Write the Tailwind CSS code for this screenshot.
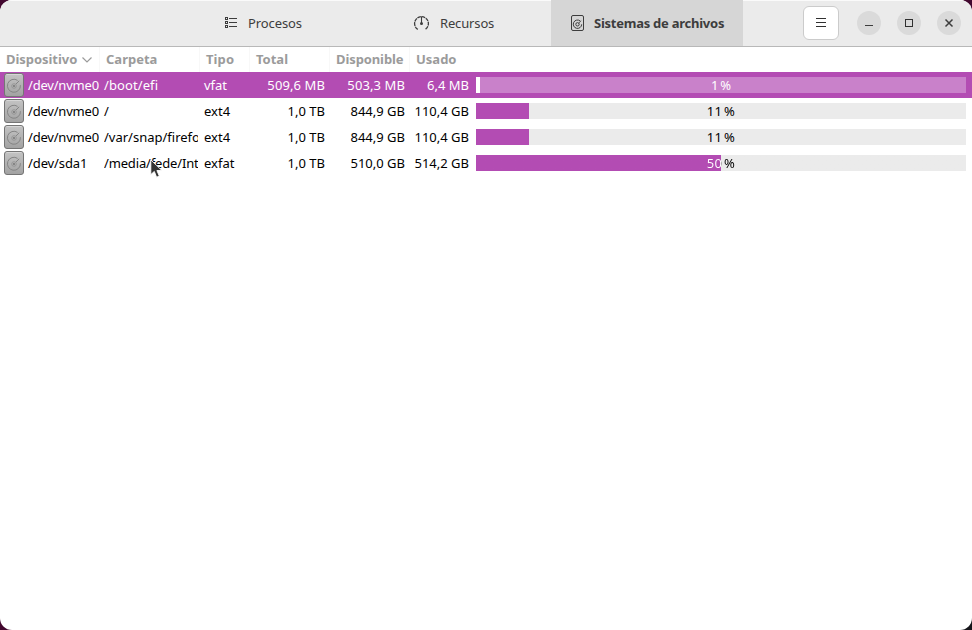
<!DOCTYPE html>
<html lang="es">
<head>
<meta charset="utf-8">
<title>Monitor del sistema</title>
<script src="https://cdn.jsdelivr.net/npm/@tailwindcss/browser@4"></script>
</head>
<body class="w-[972px] h-[630px] overflow-hidden bg-linear-to-r from-[#42082f] from-50% to-[#15151a] to-50% font-['Noto_Sans',sans-serif] text-[13px]">
<div class="absolute right-0 top-0 w-4 h-4 bg-[#42082f]"></div>
<svg width="0" height="0" class="absolute">
  <defs>
    <linearGradient id="metal" x1="0" y1="0" x2="0" y2="1"><stop offset="0" stop-color="#c4c4c4"/><stop offset="1" stop-color="#a2a2a2"/></linearGradient>
    <symbol id="drive" viewBox="0 0 20 24">
      <rect x=".5" y=".5" width="19" height="23" rx="2.5" fill="url(#metal)" stroke="#757575"/>
      <path d="M2.5 1.5h15" stroke="#d6d6d6"/>
      <path d="M13.6 7.4A6.5 6.5 0 1 0 16.4 12.2" fill="none" stroke="#858585"/>
      <path d="m11.8 11.2 3.4-3.4" stroke="#858585"/>
      <circle cx="10" cy="13" r="2.3" fill="none" stroke="#909090" stroke-width=".8"/>
      <circle cx="10" cy="13" r=".9" fill="#707070"/>
    </symbol>
  </defs>
</svg>
<div class="relative w-full h-full bg-white rounded-[12px] overflow-hidden flex flex-col">
  <header class="h-[47px] shrink-0 flex bg-[#ebebeb] border-b border-[#b8b8b8] text-[#3d3d3d] shadow-[inset_0_1px_0_#fafafa]">
    <nav class="flex pl-[167px]">
      <div class="w-[192px] flex items-center pl-[57px]">
        <svg class="w-4 h-4 mr-2" viewBox="0 0 16 16" fill="none" stroke="#3d3d3d" shape-rendering="crispEdges"><path d="M1.5 2.5h2v2h-2zM1.5 6.5h2v2h-2zM1.5 10.5h2v2h-2zM5 3.5h8M5 7.5h8M5 11.5h8"/></svg>
        <span class="pt-[2px] tracking-[-0.1px]">Procesos</span>
      </div>
      <div class="w-[192px] flex items-center pl-[54px]">
        <svg class="w-4 h-4 mr-[11px]" viewBox="0 0 16 16" fill="none" stroke="#3d3d3d"><path d="M4.8 14.4A6.9 6.9 0 1 1 12.2 14.4" stroke-width="1.3" stroke-dasharray="3.7 .7"/><path d="M8.5 1.5v7" stroke-width="1.1"/><circle cx="8.5" cy="8.5" r="1.5" fill="#3d3d3d" stroke="none"/></svg>
        <span class="pt-[2px] tracking-[-0.15px]">Recursos</span>
      </div>
      <div class="w-[192px] flex items-center pl-[20px] bg-[#d6d6d6] font-bold">
        <svg class="w-[13px] h-4 mr-[10px]" viewBox="0 0 13 16" fill="none" stroke="#3d3d3d"><rect x=".5" y=".5" width="12" height="15" rx="1.5"/><path d="M9.2 6A4.2 4.2 0 1 0 10.7 9.3"/><circle cx="6.5" cy="9.3" r="1.7"/><path d="m7.7 8.1 2.5-2.4" stroke-width=".8"/></svg>
        <span class="pt-[2px] tracking-[-0.25px]">Sistemas de archivos</span>
      </div>
    </nav>
    <div class="flex items-center pl-[60px]">
      <div class="w-9 h-[34px] rounded-[6px] border border-[#cbcbcb] bg-white flex items-center justify-center"><svg width="10" height="10" viewBox="0 0 10 10" stroke="#303030" shape-rendering="crispEdges"><path d="M0 .5h10M0 4.5h10M0 8.5h10"/></svg></div>
      <div class="flex gap-4 ml-[18px]">
        <div class="w-6 h-6 rounded-full bg-[#dadada]"><svg width="24" height="24" stroke="#3d3d3d" shape-rendering="crispEdges"><path d="M8 14.5h8"/></svg></div>
        <div class="w-6 h-6 rounded-full bg-[#dadada]"><svg width="24" height="24" fill="none" stroke="#303030" shape-rendering="crispEdges"><path d="M8.5 8.5h7v7h-7z"/></svg></div>
        <div class="w-6 h-6 rounded-full bg-[#dadada]"><svg width="24" height="24" stroke="#3d3d3d" stroke-width="1.5"><path d="m8.5 8.5 7 7m0-7-7 7"/></svg></div>
      </div>
    </div>
  </header>
  <div class="h-[25px] shrink-0 grid grid-cols-[100px_100px_50px_80px_80px_1fr] items-center font-bold text-[#9b9b9b] leading-[25px] whitespace-nowrap">
    <div class="pl-[6px] border-r border-[#f8f8f8] flex items-center"><span class="tracking-[-0.05px]">Dispositivo</span><svg class="ml-[5px]" width="10" height="6" fill="none" stroke="#9b9b9b" stroke-width="1.2"><path d="m.5.5 4.5 4.5 4.5-4.5"/></svg></div>
    <div class="pl-[6px] border-r border-[#f8f8f8]"><span>Carpeta</span></div>
    <div class="pl-[6px] border-r border-[#f8f8f8]"><span class="tracking-[0.1px]">Tipo</span></div>
    <div class="pl-[6px] border-r border-[#f8f8f8]"><span>Total</span></div>
    <div class="pl-[6px] border-r border-[#f8f8f8]"><span class="tracking-[-0.1px]">Disponible</span></div>
    <div class="pl-[6px]"><span>Usado</span></div>
  </div>
  <main class="text-black leading-[26px] whitespace-nowrap">
    <div class="h-[26px] grid grid-cols-[100px_100px_50px_75px_80px_64px_497px] items-center bg-[#b34cb3] text-white">
      <div class="flex items-center pl-1"><svg class="w-5 h-6 mr-1 shrink-0"><use href="#drive"/></svg><span class="tracking-[-0.2px]">/dev/nvme0</span></div>
      <div class="pl-1"><span class="tracking-[0.1px]">/boot/efi</span></div><div class="pl-1"><span>vfat</span></div>
      <div class="text-right"><span class="tracking-[0.1px]">509,6 MB</span></div><div class="text-right"><span class="tracking-[0.1px]">503,3 MB</span></div><div class="text-right"><span>6,4 MB</span></div>
      <div class="pl-[7px]"><div class="w-[490px] h-4 bg-[#c981ca] relative leading-4 text-center"><div class="absolute left-0 top-0 h-4 w-1 bg-white"></div><span class="[word-spacing:-1.5px]">1 %</span></div></div>
    </div>
    <div class="h-[26px] grid grid-cols-[100px_100px_50px_75px_80px_64px_497px] items-center">
      <div class="flex items-center pl-1"><svg class="w-5 h-6 mr-1 shrink-0"><use href="#drive"/></svg><span class="tracking-[-0.2px]">/dev/nvme0</span></div>
      <div class="pl-1"><span>/</span></div><div class="pl-1"><span>ext4</span></div>
      <div class="text-right"><span>1,0 TB</span></div><div class="text-right"><span>844,9 GB</span></div><div class="text-right"><span>110,4 GB</span></div>
      <div class="pl-[7px]"><div class="w-[490px] h-4 bg-[#ebebeb] relative leading-4 text-center"><div class="absolute left-0 top-0 h-4 w-[53px] bg-[#b34cb3]"></div><span class="tracking-[0.3px] [word-spacing:-2px]">11 %</span></div></div>
    </div>
    <div class="h-[26px] grid grid-cols-[100px_100px_50px_75px_80px_64px_497px] items-center">
      <div class="flex items-center pl-1"><svg class="w-5 h-6 mr-1 shrink-0"><use href="#drive"/></svg><span class="tracking-[-0.2px]">/dev/nvme0</span></div>
      <div class="ml-1 mr-[2px] overflow-hidden"><span>/var/snap/firefo</span></div><div class="pl-1"><span>ext4</span></div>
      <div class="text-right"><span>1,0 TB</span></div><div class="text-right"><span>844,9 GB</span></div><div class="text-right"><span>110,4 GB</span></div>
      <div class="pl-[7px]"><div class="w-[490px] h-4 bg-[#ebebeb] relative leading-4 text-center"><div class="absolute left-0 top-0 h-4 w-[53px] bg-[#b34cb3]"></div><span class="tracking-[0.3px] [word-spacing:-2px]">11 %</span></div></div>
    </div>
    <div class="h-[26px] grid grid-cols-[100px_100px_50px_75px_80px_64px_497px] items-center">
      <div class="flex items-center pl-1"><svg class="w-5 h-6 mr-1 shrink-0"><use href="#drive"/></svg><span class="tracking-[-0.1px]">/dev/sda1</span></div>
      <div class="ml-1 mr-[2px] overflow-hidden"><span class="tracking-[-0.15px]">/media/fede/Int</span></div><div class="pl-1"><span>exfat</span></div>
      <div class="text-right"><span>1,0 TB</span></div><div class="text-right"><span>510,0 GB</span></div><div class="text-right"><span>514,2 GB</span></div>
      <div class="pl-[7px]"><div class="w-[490px] h-4 bg-linear-to-r from-[#b34cb3] from-50% to-[#ebebeb] to-50% leading-4 text-center"><span class="tracking-[0.3px] [word-spacing:-2px] bg-linear-to-r from-white from-50% to-black to-50% bg-clip-text text-transparent">50 %</span></div></div>
    </div>
  </main>
</div>
<svg class="absolute left-[150px] top-[159px]" width="14" height="20" viewBox="0 0 14 20"><path d="M.8.8v14.8l3.5-3.2 2.3 5.8 2.7-1.1-2.4-5.6h5z" fill="#333" stroke="#fff" stroke-width=".9"/></svg>
</body>
</html>
